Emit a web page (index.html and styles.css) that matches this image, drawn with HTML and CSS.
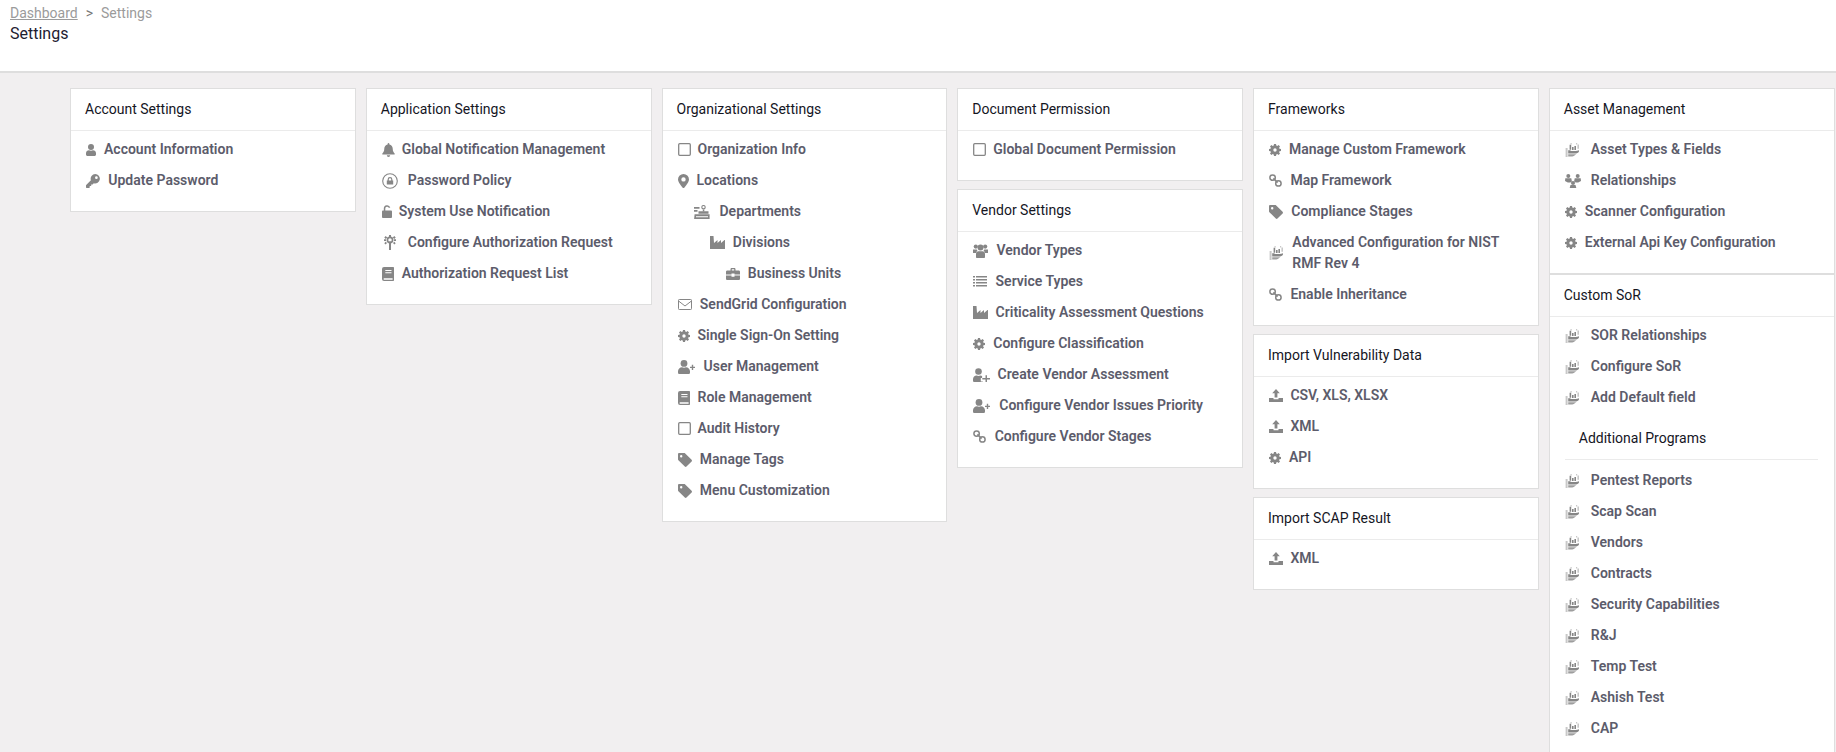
FILE: index.html
```html
<!DOCTYPE html>
<html lang="en">
<head>
<meta charset="utf-8">
<title>Settings</title>
<link rel="stylesheet" href="styles.css">
</head>
<body>
<svg class="defs" aria-hidden="true">
  <symbol id="i-user" viewBox="0 0 10 12"><circle cx="5" cy="3" r="3"/><path d="M0 10.600V9.200C0 7.400 1.400 6.200 3 6.200c.6.3 1.300.5 2 .5s1.400-.2 2-.5c1.600 0 3 1.200 3 3v1.400C10 11.400 9.400 12 8.800 12H1.200C.6 12 0 11.400 0 10.600z"/></symbol>
  <symbol id="i-key" viewBox="0 0 14 14"><path fill-rule="evenodd" d="M9.300 0a4.700 4.700 0 1 1-1.500 9.200L6.600 10.500H5.200V12H3.700v1.500L3.200 14H.5L0 13.500v-2.200l.2-.4 4.700-4.700A4.700 4.700 0 0 1 9.300 0zm1.100 2.300a1.300 1.300 0 1 0 0 2.700 1.300 1.300 0 0 0 0-2.700z"/></symbol>
  <symbol id="i-bell" viewBox="0 0 13 14"><path d="M6.500 0c.5 0 .9.400.9.900v.6c2 .4 3.300 2.100 3.300 4.100 0 3.100 1.200 4 1.900 4.800.4.400.1 1.200-.5 1.200H.9c-.6 0-.9-.8-.5-1.200.7-.8 1.900-1.700 1.900-4.800 0-2 1.300-3.700 3.300-4.100V.9c0-.5.400-.9.900-.9zM4.800 12.300h3.400a1.700 1.700 0 0 1-3.400 0z"/></symbol>
  <symbol id="i-lockc" viewBox="0 0 16 16"><circle cx="8" cy="8" r="7.300" fill="none" stroke="currentColor" stroke-width="1.100"/><path fill-rule="evenodd" d="M4.800 7.500h.8V6.400a2.400 2.400 0 0 1 4.800 0v1.100h.8v3.900H4.800zm2 0h2.400V6.400a1.200 1.200 0 0 0-2.400 0z"/></symbol>
  <symbol id="i-unlock" viewBox="0 0 10 13"><path fill-rule="evenodd" d="M1 5.500h.8V3.500a3.300 3.300 0 0 1 6.500-.8H6.700a1.800 1.800 0 0 0-3.400.8v2H9c.5 0 1 .5 1 1V12c0 .5-.5 1-1 1H1c-.5 0-1-.5-1-1V6.500c0-.5.500-1 1-1z"/></symbol>
  <symbol id="i-tower" viewBox="0 0 12 15"><path d="M5 6.500h2V15H5z"/><circle cx="6" cy="5" r="2.600" fill="none" stroke="currentColor" stroke-width="1.700"/><path d="M5 0h2v2H5zM.3 2.400l1.400-1.400 1.500 1.500-1.400 1.400zM11.700 2.400l-1.400-1.400-1.500 1.500 1.400 1.400zM0 4.200h2v1.700H0zM10 4.200h2v1.700h-2zM1.700 6.800l1.300 1.300-1.400 1.400-1.300-1.300zM10.300 6.800L9 8.100l1.400 1.400 1.300-1.300z"/></symbol>
  <symbol id="i-book" viewBox="0 0 12 14"><path fill-rule="evenodd" d="M2 0h9.300c.4 0 .7.300.7.700v12.600c0 .4-.3.700-.7.700H2a2 2 0 0 1-2-2V2a2 2 0 0 1 2-2zm1.300 3v1h6.200V3zm0 2.300v1h6.200v-1zM2 11.300a.9.900 0 0 0 0 1.500h8.600v-1.500z"/></symbol>
  <symbol id="i-square" viewBox="0 0 13 13"><rect x=".7" y=".7" width="11.600" height="11.600" rx="1" fill="none" stroke="currentColor" stroke-width="1.300"/></symbol>
  <symbol id="i-marker" viewBox="0 0 11 14"><path fill-rule="evenodd" d="M5.500 0a5.500 5.500 0 0 1 5.500 5.400c0 2.500-3.600 7-4.800 8.300a.9.900 0 0 1-1.400 0C3.600 12.400 0 7.900 0 5.400A5.500 5.500 0 0 1 5.500 0zm0 3.200a2.200 2.200 0 1 0 0 4.400 2.200 2.200 0 0 0 0-4.400z"/></symbol>
  <symbol id="i-dept" viewBox="0 0 16 14"><path d="M0 2h5.500v1.700H0zM0 5h3.500v1.700H0zM4.500 6.300h10v2.500h-10zM.6 9.300h15V14H.1zM2 11.200v1h12v-1z"/><path d="M8.800 4.500h1.500v2H8.800z"/><circle cx="9.500" cy="2.200" r="1.700" fill="none" stroke="currentColor" stroke-width="1.100"/></symbol>
  <symbol id="i-industry" viewBox="0 0 15 13"><path d="M0 0h3.500l.5 7 3.500-3v3l3.500-3v3l3.500-3h.5v9H0z"/></symbol>
  <symbol id="i-case" viewBox="0 0 14 12"><path fill-rule="evenodd" d="M4.500 2.500V1.200C4.500.5 5 0 5.700 0h2.600c.7 0 1.200.5 1.200 1.200v1.300h3.200c.7 0 1.300.6 1.300 1.300v2.700H8.500V5.500h-3v1H0V3.800c0-.7.600-1.300 1.300-1.300zm1.300 0h2.400V1.300H5.800zM0 7.500h5.500v1.200h3V7.500H14v3.200c0 .7-.6 1.300-1.300 1.300H1.300C.6 12 0 11.400 0 10.700z"/></symbol>
  <symbol id="i-mail" viewBox="0 0 14 11"><rect x=".5" y=".5" width="13" height="10" rx=".8" fill="none" stroke="currentColor"/><path d="M.8 2.200 7 7l6.200-4.800" fill="none" stroke="currentColor"/></symbol>
  <symbol id="i-gear" viewBox="0 0 12 12"><path fill-rule="evenodd" d="M5 0h2l.3 1.500 1 .4L9.600 1 11 2.400l-.9 1.300.4 1L12 5v2l-1.500.3-.4 1 .9 1.300L9.600 11l-1.300-.9-1 .4L7 12H5l-.3-1.500-1-.4-1.300.9L1 9.600l.9-1.300-.4-1L0 7V5l1.500-.3.4-1L1 2.400 2.400 1l1.300.9 1-.4zM6 4.300a1.700 1.700 0 1 0 0 3.400 1.700 1.700 0 0 0 0-3.400z"/></symbol>
  <symbol id="i-userplus" viewBox="0 0 17 14"><circle cx="6" cy="3.400" r="3.400"/><path d="M0 12.400v-1.100c0-2.400 1.900-4.100 4-4.100.6.300 1.300.5 2 .5s1.400-.2 2-.5c2.100 0 4 1.700 4 4.100v1.100c0 .9-.7 1.600-1.500 1.600h-9C.7 14 0 13.300 0 12.400zM13.800 4.700h1.400v2h1.800v1.400h-1.800v2h-1.400v-2H12V6.700h1.800z"/></symbol>
  <symbol id="i-usercheck" viewBox="0 0 17 14"><circle cx="5.500" cy="3.500" r="3.300"/><path d="M0 12.700v-1.400c0-2.200 1.700-3.800 3.600-3.800.6.300 1.200.5 1.900.5s1.300-.2 1.900-.5c.6 0 1.200.2 1.700.5v2H7.800v3.500h2V14H1.300C.6 14 0 13.400 0 12.700zM12.500 7.300h1.500v2.700H17v1.500h-3V14h-1.500v-2.500H9.300V10h3.200z"/></symbol>
  <symbol id="i-users" viewBox="0 0 15 14"><circle cx="2.800" cy="2.600" r="2.100"/><circle cx="12.200" cy="2.600" r="2.100"/><circle cx="7.500" cy="3.600" r="3"/><path d="M0 5.500h3.800l.6 1.200c-.8.600-1.200 1.400-1.400 2.400H0zM15 5.500h-3.800l-.6 1.200c.8.600 1.200 1.400 1.400 2.400H15zM5.500 7.200h4c1.500 0 2.500 1.300 2.500 2.800v3c0 .6-.4 1-1 1H4c-.6 0-1-.4-1-1v-3c0-1.500 1-2.800 2.500-2.800z"/></symbol>
  <symbol id="i-list" viewBox="0 0 14 11"><path d="M0 0h2v1.600H0zM3 0h11v1.600H3zM0 3h2v1.600H0zM3 3h11v1.600H3zM0 6h2v1.600H0zM3 6h11v1.600H3zM0 9h2v1.600H0zM3 9h11v1.600H3z"/></symbol>
  <symbol id="i-link" viewBox="0 0 13 13"><g fill="none" stroke="currentColor" stroke-width="1.500"><circle cx="3.600" cy="3.600" r="2.700"/><circle cx="9.400" cy="9.400" r="2.700"/><path d="M4.400 4.400l4.200 4.200"/></g></symbol>
  <symbol id="i-tag" viewBox="0 0 14 14"><path fill-rule="evenodd" d="M0 1.200C0 .5.500 0 1.200 0h5.100c.3 0 .6.100.9.400l6.400 6.400c.5.500.5 1.200 0 1.700l-5.100 5.100c-.5.500-1.200.5-1.700 0L.4 7.200C.1 6.900 0 6.600 0 6.300zM3.200 2a1.200 1.200 0 1 0 0 2.400 1.200 1.200 0 0 0 0-2.400z"/></symbol>
  <symbol id="i-upload" viewBox="0 0 14 13"><path d="M7 0l3.800 4.300H8.400v4.300H5.600V4.300H3.200zM0 9h4.500v1.200h5V9H14v4H0z"/></symbol>
  <symbol id="i-hand" viewBox="0 0 14 14"><g opacity=".45"><path d="M.6 5h2v9h-2zM12.400 1.500H14v4.300h-1.600zM11 0h1.200v1.500H11zM5.500 0h1.200v1.500H5.500z"/></g><path d="M4.600 1.800h1.600v5H4.600zM7 4h1.600v3H7zM9.400 3h1.600v4H9.400z"/><path d="M3.200 7.200h1.600c1.400 1 4 1.300 9.200 0v1.200c-.7 1.400-2.300 2-4 2H3.200z"/><path d="M3.200 11.200h8l-1.700 1.300c-1 .8-1.800 1-3 1H3.200z" opacity=".8"/></symbol>
  <symbol id="i-rel" viewBox="0 0 16 14"><circle cx="3.300" cy="2" r="2"/><circle cx="12.700" cy="2" r="2"/><circle cx="8" cy="9" r="2"/><path d="M.3 4.200h6l.6 3.300-1.600 1H2.800L0 7zM15.700 4.200h-6l-.6 3.300 1.600 1h2.500L16 7zM5.500 11h5l.8 3H4.700z"/></symbol>
</svg>

<header class="page-head">
  <nav class="crumbs"><a class="crumb-link" href="#">Dashboard</a><span class="crumb-sep">&gt;</span><span>Settings</span></nav>
  <h1 class="page-title">Settings</h1>
</header>

<main class="board">
  <div class="col">
    <section class="card">
      <h2 class="card-title">Account Settings</h2>
      <ul class="menu">
        <li class="item"><span class="ico w18"><svg class="s-user"><use href="#i-user"/></svg></span><a href="#">Account Information</a></li>
        <li class="item"><span class="ico w22"><svg class="s-key"><use href="#i-key"/></svg></span><a href="#">Update Password</a></li>
      </ul>
    </section>
  </div>

  <div class="col">
    <section class="card">
      <h2 class="card-title">Application Settings</h2>
      <ul class="menu">
        <li class="item"><span class="ico w20"><svg class="s-bell"><use href="#i-bell"/></svg></span><a href="#">Global Notification Management</a></li>
        <li class="item"><span class="ico w26"><svg class="s-lockc"><use href="#i-lockc"/></svg></span><a href="#">Password Policy</a></li>
        <li class="item"><span class="ico w17"><svg class="s-unlock"><use href="#i-unlock"/></svg></span><a href="#">System Use Notification</a></li>
        <li class="item"><span class="ico w26 ico-tower"><svg class="s-tower"><use href="#i-tower"/></svg></span><a href="#">Configure Authorization Request</a></li>
        <li class="item"><span class="ico w20"><svg class="s-book"><use href="#i-book"/></svg></span><a href="#">Authorization Request List</a></li>
      </ul>
    </section>
  </div>

  <div class="col">
    <section class="card">
      <h2 class="card-title">Organizational Settings</h2>
      <ul class="menu">
        <li class="item"><span class="ico w20"><svg class="s-square"><use href="#i-square"/></svg></span><a href="#">Organization Info</a></li>
        <li class="item"><span class="ico w19"><svg class="s-marker"><use href="#i-marker"/></svg></span><a href="#">Locations</a></li>
        <li class="item lvl1"><span class="ico w26"><svg class="s-dept"><use href="#i-dept"/></svg></span><a href="#">Departments</a></li>
        <li class="item lvl2"><span class="ico w23"><svg class="s-industry"><use href="#i-industry"/></svg></span><a href="#">Divisions</a></li>
        <li class="item lvl3"><span class="ico w22"><svg class="s-case"><use href="#i-case"/></svg></span><a href="#">Business Units</a></li>
        <li class="item"><span class="ico w22"><svg class="s-mail"><use href="#i-mail"/></svg></span><a href="#">SendGrid Configuration</a></li>
        <li class="item"><span class="ico w20"><svg class="s-gear"><use href="#i-gear"/></svg></span><a href="#">Single Sign-On Setting</a></li>
        <li class="item"><span class="ico w26"><svg class="s-userplus"><use href="#i-userplus"/></svg></span><a href="#">User Management</a></li>
        <li class="item"><span class="ico w20"><svg class="s-book"><use href="#i-book"/></svg></span><a href="#">Role Management</a></li>
        <li class="item"><span class="ico w20"><svg class="s-square"><use href="#i-square"/></svg></span><a href="#">Audit History</a></li>
        <li class="item"><span class="ico w22"><svg class="s-tag"><use href="#i-tag"/></svg></span><a href="#">Manage Tags</a></li>
        <li class="item"><span class="ico w22"><svg class="s-tag"><use href="#i-tag"/></svg></span><a href="#">Menu Customization</a></li>
      </ul>
    </section>
  </div>

  <div class="col">
    <section class="card">
      <h2 class="card-title">Document Permission</h2>
      <ul class="menu">
        <li class="item"><span class="ico w20"><svg class="s-square"><use href="#i-square"/></svg></span><a href="#">Global Document Permission</a></li>
      </ul>
    </section>
    <section class="card">
      <h2 class="card-title">Vendor Settings</h2>
      <ul class="menu">
        <li class="item"><span class="ico w23"><svg class="s-users"><use href="#i-users"/></svg></span><a href="#">Vendor Types</a></li>
        <li class="item"><span class="ico w22"><svg class="s-list"><use href="#i-list"/></svg></span><a href="#">Service Types</a></li>
        <li class="item"><span class="ico w22"><svg class="s-industry"><use href="#i-industry"/></svg></span><a href="#">Criticality Assessment Questions</a></li>
        <li class="item"><span class="ico w20"><svg class="s-gear"><use href="#i-gear"/></svg></span><a href="#">Configure Classification</a></li>
        <li class="item"><span class="ico w24"><svg class="s-userplus"><use href="#i-usercheck"/></svg></span><a href="#">Create Vendor Assessment</a></li>
        <li class="item"><span class="ico w26"><svg class="s-userplus"><use href="#i-userplus"/></svg></span><a href="#">Configure Vendor Issues Priority</a></li>
        <li class="item"><span class="ico w21"><svg class="s-link"><use href="#i-link"/></svg></span><a href="#">Configure Vendor Stages</a></li>
      </ul>
    </section>
  </div>

  <div class="col">
    <section class="card">
      <h2 class="card-title">Frameworks</h2>
      <ul class="menu">
        <li class="item"><span class="ico w20"><svg class="s-gear"><use href="#i-gear"/></svg></span><a href="#">Manage Custom Framework</a></li>
        <li class="item"><span class="ico w21"><svg class="s-link"><use href="#i-link"/></svg></span><a href="#">Map Framework</a></li>
        <li class="item"><span class="ico w22"><svg class="s-tag"><use href="#i-tag"/></svg></span><a href="#">Compliance Stages</a></li>
        <li class="item"><span class="ico w23"><svg class="s-hand"><use href="#i-hand"/></svg></span><a href="#">Advanced Configuration for NIST RMF Rev 4</a></li>
        <li class="item"><span class="ico w21"><svg class="s-link"><use href="#i-link"/></svg></span><a href="#">Enable Inheritance</a></li>
      </ul>
    </section>
    <section class="card">
      <h2 class="card-title">Import Vulnerability Data</h2>
      <ul class="menu">
        <li class="item"><span class="ico w21"><svg class="s-upload"><use href="#i-upload"/></svg></span><a href="#">CSV, XLS, XLSX</a></li>
        <li class="item"><span class="ico w21"><svg class="s-upload"><use href="#i-upload"/></svg></span><a href="#">XML</a></li>
        <li class="item"><span class="ico w20"><svg class="s-gear"><use href="#i-gear"/></svg></span><a href="#">API</a></li>
      </ul>
    </section>
    <section class="card">
      <h2 class="card-title">Import SCAP Result</h2>
      <ul class="menu">
        <li class="item"><span class="ico w21"><svg class="s-upload"><use href="#i-upload"/></svg></span><a href="#">XML</a></li>
      </ul>
    </section>
  </div>

  <div class="col col-joined">
    <section class="card">
      <h2 class="card-title">Asset Management</h2>
      <ul class="menu">
        <li class="item"><span class="ico w26"><svg class="s-hand"><use href="#i-hand"/></svg></span><a href="#">Asset Types &amp; Fields</a></li>
        <li class="item"><span class="ico w26"><svg class="s-rel"><use href="#i-rel"/></svg></span><a href="#">Relationships</a></li>
        <li class="item"><span class="ico w20"><svg class="s-gear"><use href="#i-gear"/></svg></span><a href="#">Scanner Configuration</a></li>
        <li class="item"><span class="ico w20"><svg class="s-gear"><use href="#i-gear"/></svg></span><a href="#">External Api Key Configuration</a></li>
      </ul>
    </section>
    <section class="card">
      <h2 class="card-title">Custom SoR</h2>
      <ul class="menu menu-tight">
        <li class="item"><span class="ico w26"><svg class="s-hand"><use href="#i-hand"/></svg></span><a href="#">SOR Relationships</a></li>
        <li class="item"><span class="ico w26"><svg class="s-hand"><use href="#i-hand"/></svg></span><a href="#">Configure SoR</a></li>
        <li class="item"><span class="ico w26"><svg class="s-hand"><use href="#i-hand"/></svg></span><a href="#">Add Default field</a></li>
      </ul>
      <h3 class="sub-title">Additional Programs</h3>
      <ul class="menu menu-sub">
        <li class="item"><span class="ico w26"><svg class="s-hand"><use href="#i-hand"/></svg></span><a href="#">Pentest Reports</a></li>
        <li class="item"><span class="ico w26"><svg class="s-hand"><use href="#i-hand"/></svg></span><a href="#">Scap Scan</a></li>
        <li class="item"><span class="ico w26"><svg class="s-hand"><use href="#i-hand"/></svg></span><a href="#">Vendors</a></li>
        <li class="item"><span class="ico w26"><svg class="s-hand"><use href="#i-hand"/></svg></span><a href="#">Contracts</a></li>
        <li class="item"><span class="ico w26"><svg class="s-hand"><use href="#i-hand"/></svg></span><a href="#">Security Capabilities</a></li>
        <li class="item"><span class="ico w26"><svg class="s-hand"><use href="#i-hand"/></svg></span><a href="#">R&amp;J</a></li>
        <li class="item"><span class="ico w26"><svg class="s-hand"><use href="#i-hand"/></svg></span><a href="#">Temp Test</a></li>
        <li class="item"><span class="ico w26"><svg class="s-hand"><use href="#i-hand"/></svg></span><a href="#">Ashish Test</a></li>
        <li class="item"><span class="ico w26"><svg class="s-hand"><use href="#i-hand"/></svg></span><a href="#">CAP</a></li>
      </ul>
    </section>
  </div>
</main>
</body>
</html>
```

FILE: styles.css
```css
* { box-sizing: border-box; }

html, body {
  margin: 0;
  height: 100%;
  overflow: hidden;
}

body {
  background: #f1eff0;
  font-family: Roboto, "Liberation Sans", sans-serif;
  font-size: 14px;
  color: #212529;
}

.defs { display: none; }

.page-head {
  height: 73px;
  padding: 3px 10px 0;
  background: #fff;
  border-bottom: 2px solid #dedede;
}

.crumbs {
  display: flex;
  line-height: 20px;
  color: #9b9b9b;
}

.crumb-link {
  color: #9b9b9b;
  text-decoration: underline;
}

.crumb-sep {
  margin: 0 8px;
  color: #777;
}

.page-title {
  margin: 1px 0 0;
  font-size: 16px;
  font-weight: 400;
  line-height: 20px;
  color: #1d2030;
}

.board {
  display: grid;
  grid-template-columns: repeat(6, minmax(0, 1fr));
  column-gap: 10px;
  align-items: start;
  padding: 15px 1.5px 0 70px;
}

.col {
  display: flex;
  flex-direction: column;
  gap: 8px;
}

.col-joined { gap: 0; }

.card {
  background: #fff;
  border: 1px solid #dedede;
}

.card-title {
  margin: 0;
  padding: 10px 14px;
  font-size: 14px;
  font-weight: 400;
  line-height: 21px;
  color: #15161f;
  border-bottom: 1px solid #ebebeb;
}

.menu {
  margin: 0;
  padding: 8px 15px 10px;
  list-style: none;
}

.menu-tight { padding-bottom: 0; }

.menu-sub { padding-top: 10px; }

.sub-title {
  margin: 0 16px 0 15px;
  padding: 10px 14px;
  font-size: 14px;
  font-weight: 400;
  line-height: 21px;
  color: #15161f;
  border-bottom: 1px solid #ebebeb;
}

.item {
  display: flex;
  align-items: center;
  margin-bottom: 10px;
  line-height: 21px;
  font-weight: 600;
  color: #5c5c6b;
}

.item a {
  color: inherit;
  text-decoration: none;
}

.lvl1 { padding-left: 16px; }
.lvl2 { padding-left: 32px; }
.lvl3 { padding-left: 48px; }

.ico {
  flex: none;
  display: flex;
  align-items: center;
  color: #868686;
}

.ico svg {
  display: block;
  fill: currentColor;
}

.ico-tower { padding-left: 2px; }

.w17 { width: 17px; }
.w18 { width: 18px; }
.w19 { width: 19px; }
.w20 { width: 20px; }
.w21 { width: 21.4px; }
.w22 { width: 22.3px; }
.w23 { width: 23.3px; }
.w24 { width: 24.3px; }
.w26 { width: 26px; }

.s-user { width: 10px; height: 12px; }
.s-key { width: 14px; height: 14px; }
.s-bell { width: 13px; height: 14px; }
.s-lockc { width: 16px; height: 16px; }
.s-unlock { width: 10px; height: 13px; }
.s-tower { width: 12px; height: 15px; }
.s-book { width: 12px; height: 14px; }
.s-square { width: 13px; height: 13px; }
.s-marker { width: 11px; height: 14px; }
.s-dept { width: 16px; height: 14px; }
.s-industry { width: 15px; height: 13px; }
.s-case { width: 14px; height: 12px; }
.s-mail { width: 14px; height: 11px; }
.s-gear { width: 12px; height: 12px; }
.s-userplus { width: 17px; height: 14px; }
.s-users { width: 15px; height: 14px; }
.s-list { width: 14px; height: 11px; }
.s-link { width: 13px; height: 13px; }
.s-tag { width: 14px; height: 14px; }
.s-upload { width: 14px; height: 13px; }
.s-hand { width: 14px; height: 14px; }
.s-rel { width: 16px; height: 14px; }
```
